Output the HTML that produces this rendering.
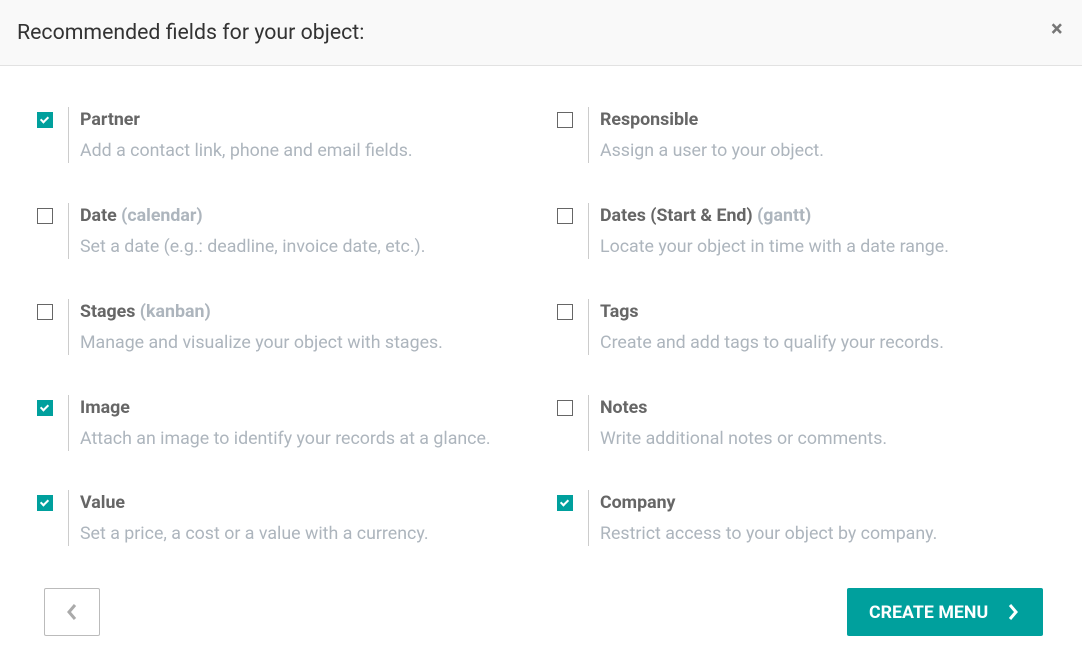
<!DOCTYPE html>
<html><head><style>
*{margin:0;padding:0;box-sizing:border-box}
body{width:1082px;height:658px;background:#fff;font-family:"Roboto","Liberation Sans",sans-serif;position:relative;overflow:hidden}
.hd{position:absolute;left:0;top:0;width:1082px;height:66px;background:#f9f9f9;border-bottom:1px solid #e2e2e2}
.hd h1{position:absolute;left:17px;top:20px;font-size:21.3px;font-weight:400;color:#333}
.x{position:absolute;left:1051px;top:17px;font-size:22px;font-weight:bold;color:#777}
.it{position:absolute;width:480px;height:58px}
.cb{position:absolute;left:0;top:7px;width:16px;height:16px;border:1.5px solid #666;background:#fff}
.cb.on{background:#00A09D;border-color:#00A09D}
.cb.on:after{content:"";position:absolute;left:4px;top:2px;width:3px;height:6px;border:solid #fff;border-width:0 2px 2px 0;transform:rotate(45deg)}
.ln{position:absolute;left:31px;top:2px;width:1px;height:56px;background:#ccc}
.t{position:absolute;left:43px;top:4px;font-size:17.8px;font-weight:bold;color:#666;white-space:nowrap}
.t span{color:#adb5bd}
.d{position:absolute;left:43px;top:35px;font-size:17.8px;color:#adb5bd;white-space:nowrap}
.back{position:absolute;left:44px;top:588px;width:56px;height:48px;border:1px solid #bbb;border-radius:2px;background:#fff}
.go{position:absolute;left:847px;top:588px;width:196px;height:48px;background:#00A09D;border-radius:2px;color:#fff;font-size:17.8px;font-weight:bold;line-height:49px;padding-left:22px}
</style></head><body>
<div class="hd"><h1>Recommended fields for your object:</h1><div class="x">×</div></div>

<div class="it" style="left:37px;top:105px"><div class="cb on"></div><div class="ln"></div><div class="t">Partner</div><div class="d">Add a contact link, phone and email fields.</div></div>
<div class="it" style="left:557px;top:105px"><div class="cb"></div><div class="ln"></div><div class="t">Responsible</div><div class="d">Assign a user to your object.</div></div>

<div class="it" style="left:37px;top:201px"><div class="cb"></div><div class="ln"></div><div class="t">Date <span>(calendar)</span></div><div class="d">Set a date (e.g.: deadline, invoice date, etc.).</div></div>
<div class="it" style="left:557px;top:201px"><div class="cb"></div><div class="ln"></div><div class="t">Dates (Start &amp; End) <span>(gantt)</span></div><div class="d">Locate your object in time with a date range.</div></div>

<div class="it" style="left:37px;top:297px"><div class="cb"></div><div class="ln"></div><div class="t">Stages <span>(kanban)</span></div><div class="d">Manage and visualize your object with stages.</div></div>
<div class="it" style="left:557px;top:297px"><div class="cb"></div><div class="ln"></div><div class="t">Tags</div><div class="d">Create and add tags to qualify your records.</div></div>

<div class="it" style="left:37px;top:393px"><div class="cb on"></div><div class="ln"></div><div class="t">Image</div><div class="d">Attach an image to identify your records at a glance.</div></div>
<div class="it" style="left:557px;top:393px"><div class="cb"></div><div class="ln"></div><div class="t">Notes</div><div class="d">Write additional notes or comments.</div></div>

<div class="it" style="left:37px;top:488px"><div class="cb on"></div><div class="ln"></div><div class="t">Value</div><div class="d">Set a price, a cost or a value with a currency.</div></div>
<div class="it" style="left:557px;top:488px"><div class="cb on"></div><div class="ln"></div><div class="t">Company</div><div class="d">Restrict access to your object by company.</div></div>

<div class="back"><svg width="56" height="48" style="position:absolute;left:-1px;top:-1px"><path d="M31 17 L25 24 L31 31" stroke="#aaa" stroke-width="3" fill="none"/></svg></div>
<div class="go">CREATE MENU<svg width="14" height="20" style="position:absolute;left:160px;top:14px"><path d="M3 3 L9 10 L3 17" stroke="#fff" stroke-width="3" fill="none"/></svg></div>
</body></html>
